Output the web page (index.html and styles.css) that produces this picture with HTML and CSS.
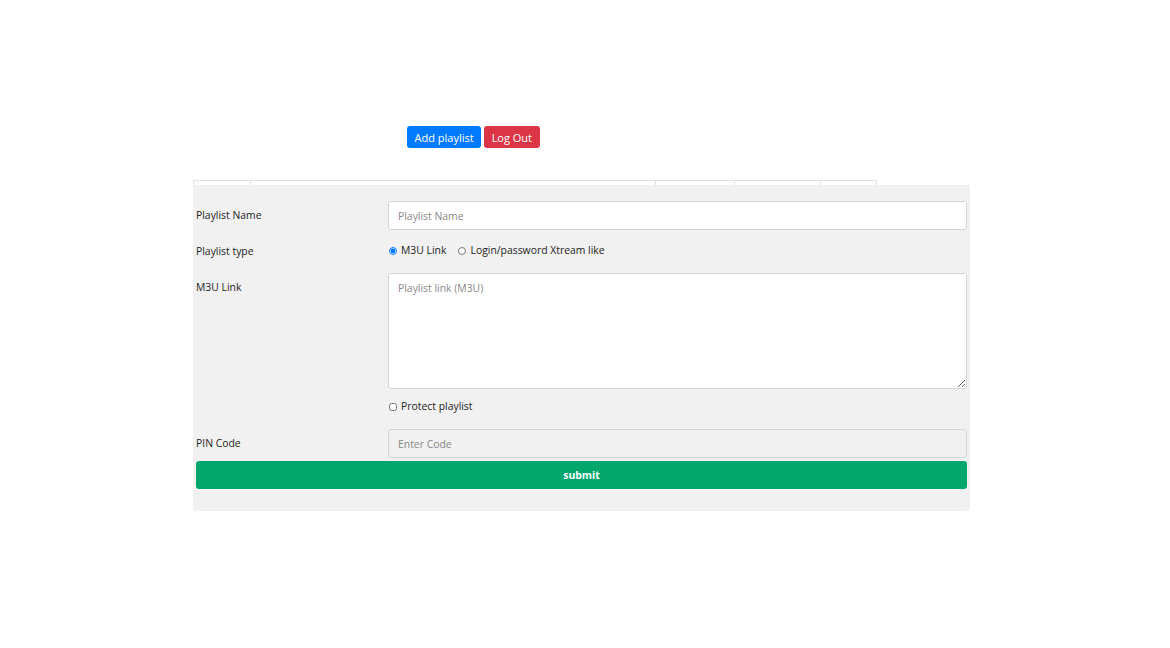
FILE: index.html
```html
<!DOCTYPE html>
<html>
<head>
    <title>Playlists</title>
    <link rel="stylesheet" href="styles.css">
</head>
<body>
    <div class="top-actions">
        <button class="btn btn-blue">Add playlist</button>
        <button class="btn btn-red">Log Out</button>
    </div>

    <div class="tabs">
        <div class="tab" style="width: 56px"></div>
        <div class="tab" style="width: 404px"></div>
        <div class="tab" style="width: 78px"></div>
        <div class="tab" style="width: 85px"></div>
        <div class="tab" style="width: 54px"></div>
    </div>

    <form class="panel">
        <div class="row">
            <label class="label">Playlist Name</label>
            <input type="text" class="field" placeholder="Playlist Name">
        </div>
        <div class="row">
            <label class="label">Playlist type</label>
            <div class="choices">
                <label class="choice"><input type="radio" name="ptype" checked> M3U Link</label>
                <label class="choice"><input type="radio" name="ptype"> Login/password Xtream like</label>
            </div>
        </div>
        <div class="row">
            <label class="label">M3U Link</label>
            <textarea class="field area" placeholder="Playlist link (M3U)"></textarea>
        </div>
        <div class="row">
            <span></span>
            <label class="choice protect"><input type="checkbox"> Protect playlist</label>
        </div>
        <div class="row">
            <label class="label">PIN Code</label>
            <input type="text" class="field pin" placeholder="Enter Code" disabled>
        </div>
        <button type="button" class="submit">submit</button>
    </form>
</body>
</html>
```

FILE: styles.css
```css
body {
    margin: 0;
    font-family: "Open Sans", "Noto Sans", Arial, sans-serif;
    font-size: 10.4px;
    color: #222;
    background: #fff;
}

.top-actions {
    display: flex;
    gap: 3px;
    padding-top: 126px;
    padding-left: 407px;
}

.btn {
    height: 22px;
    padding: 0 7.5px;
    border: none;
    border-radius: 3px;
    color: #fff;
    font-family: inherit;
    font-size: 11px;
    cursor: pointer;
}

.btn-blue {
    background-color: #007bff;
}

.btn-red {
    background-color: #dc3545;
}

.tabs {
    display: flex;
    margin-top: 32px;
    margin-left: 193px;
    width: 683px;
    height: 4px;
    border-top: 1px solid #dfe3e8;
    border-right: 1px solid #dfe3e8;
}

.tab {
    border-left: 1px solid #dfe3e8;
    flex: none;
}

.panel {
    margin: 0 0 0 193px;
    width: 777px;
    box-sizing: border-box;
    padding: 16px 3px 22px 3px;
    background-color: #f1f1f1;
    border-radius: 0 0 4px 4px;
}

.row {
    display: grid;
    grid-template-columns: 192px 1fr;
    margin-bottom: 12px;
}

.label {
    padding-top: 7px;
    line-height: 15px;
}

.field {
    height: 29px;
    box-sizing: border-box;
    padding: 0 9px;
    border: 1px solid #d4d4d4;
    border-radius: 3px;
    background-color: #fff;
    font-family: inherit;
    font-size: 10.4px;
    color: #333;
}

.field::placeholder {
    color: #888;
}

.area {
    height: 116px;
    padding-top: 7px;
    resize: both;
}

.pin {
    background-color: #f1f1f1;
}

.row:nth-child(2) {
    margin-top: 1px;
    margin-bottom: 14px;
}

.row:nth-child(2) .label {
    padding-top: 2px;
}

.choices {
    display: flex;
    gap: 11px;
    align-items: center;
}

.choice {
    display: flex;
    align-items: center;
    gap: 4px;
    line-height: 15px;
}

.choice input {
    margin: 0 0 0 1px;
    width: 8px;
    height: 8px;
}

.protect {
    margin-top: -2px;
    margin-bottom: 3px;
}

.row:nth-child(5) {
    margin-bottom: 3px;
}

.submit {
    display: block;
    width: 100%;
    height: 28px;
    border: none;
    border-radius: 3px;
    background-color: #04a76b;
    color: #fff;
    font-family: inherit;
    font-size: 10.4px;
    font-weight: bold;
    cursor: pointer;
}
```
